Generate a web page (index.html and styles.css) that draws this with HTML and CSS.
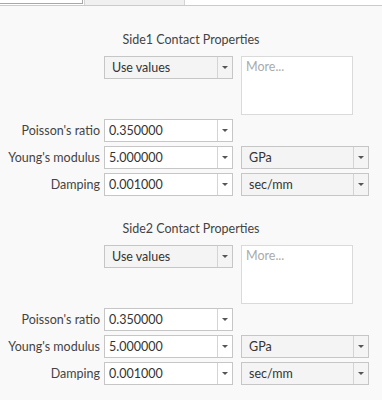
FILE: index.html
```html
<!DOCTYPE html>
<html lang="en">
<head>
  <meta charset="UTF-8" />
  <title>Contact Properties</title>
  <link rel="stylesheet" href="styles.css">
</head>
<body>
  <div class="tabstrip">
    <div class="tab-field"></div>
    <div class="tab"></div>
  </div>

  <section class="props">
    <h2 class="props-title">Side1 Contact Properties</h2>
    <div class="props-grid">
      <span></span>
      <div class="combo combo-select"><span class="combo-text">Use values</span><span class="combo-btn"><i class="arrow"></i></span></div>
      <div class="more">More...</div>

      <label class="prop-label">Poisson's ratio</label>
      <div class="combo"><span class="combo-text">0.350000</span><span class="combo-btn"><i class="arrow"></i></span></div>
      <span></span>

      <label class="prop-label">Young's modulus</label>
      <div class="combo"><span class="combo-text">5.000000</span><span class="combo-btn"><i class="arrow"></i></span></div>
      <div class="combo combo-select combo-unit"><span class="combo-text">GPa</span><span class="combo-btn"><i class="arrow"></i></span></div>

      <label class="prop-label">Damping</label>
      <div class="combo"><span class="combo-text">0.001000</span><span class="combo-btn"><i class="arrow"></i></span></div>
      <div class="combo combo-select combo-unit"><span class="combo-text">sec/mm</span><span class="combo-btn"><i class="arrow"></i></span></div>
    </div>
  </section>

  <section class="props">
    <h2 class="props-title">Side2 Contact Properties</h2>
    <div class="props-grid">
      <span></span>
      <div class="combo combo-select"><span class="combo-text">Use values</span><span class="combo-btn"><i class="arrow"></i></span></div>
      <div class="more">More...</div>

      <label class="prop-label">Poisson's ratio</label>
      <div class="combo"><span class="combo-text">0.350000</span><span class="combo-btn"><i class="arrow"></i></span></div>
      <span></span>

      <label class="prop-label">Young's modulus</label>
      <div class="combo"><span class="combo-text">5.000000</span><span class="combo-btn"><i class="arrow"></i></span></div>
      <div class="combo combo-select combo-unit"><span class="combo-text">GPa</span><span class="combo-btn"><i class="arrow"></i></span></div>

      <label class="prop-label">Damping</label>
      <div class="combo"><span class="combo-text">0.001000</span><span class="combo-btn"><i class="arrow"></i></span></div>
      <div class="combo combo-select combo-unit"><span class="combo-text">sec/mm</span><span class="combo-btn"><i class="arrow"></i></span></div>
    </div>
  </section>
</body>
</html>
```

FILE: styles.css
```css
:root {
  --bg: #f9f9f9;
  --border: #c6c6c6;
  --border-light: #dadada;
  --text: #333;
  --label: #444;
}
*, *::before, *::after {
  box-sizing: border-box;
}
body {
  margin: 0;
  background: var(--bg);
  font-family: Lato, "Open Sans", sans-serif;
  font-size: 12.5px;
  color: var(--text);
}

/* cut-off tab row at the top */
.tabstrip {
  display: flex;
  height: 6px;
  background: #fff;
  border-bottom: 1px solid #cbcbcb;
}
.tab-field {
  width: 83px;
  height: 4px;
  border-right: 1px solid #a8a8a8;
  border-bottom: 1px solid #a8a8a8;
}
.tab {
  margin-left: 1px;
  width: 101px;
  background: #f0f0f0;
  border-left: 1px solid #d4d4d4;
  border-right: 1px solid #d4d4d4;
}

.props {
  padding-top: 26px;
}
.props + .props {
  padding-top: 25px;
}
.props-title {
  margin: 0 0 8px;
  font-size: 12.5px;
  font-weight: normal;
  line-height: 16px;
  text-align: center;
  color: var(--label);
}
.props-grid {
  display: grid;
  grid-template-columns: 104px 129px 136px;
  row-gap: 4px;
  align-items: start;
}
.prop-label {
  text-align: right;
  padding-right: 4px;
  line-height: 23px;
  color: var(--label);
  white-space: nowrap;
}

.combo {
  display: flex;
  height: 23px;
  border: 1px solid var(--border);
  background: #fff;
}
.combo-text {
  flex: 1;
  padding-left: 4px;
  line-height: 21px;
  white-space: nowrap;
}
.combo-btn {
  width: 15px;
  border-left: 1px solid #d4d4d4;
  display: flex;
  align-items: center;
  justify-content: center;
}
.arrow {
  width: 0;
  height: 0;
  border-left: 3px solid transparent;
  border-right: 3px solid transparent;
  border-top: 3px solid #555;
}
.combo-select {
  background: #f4f4f4;
}
.combo-select .combo-text {
  padding-left: 7px;
}
.combo-unit {
  margin-left: 8px;
}

.more {
  margin-left: 8px;
  width: 112px;
  height: 59px;
  background: #fff;
  border: 1px solid var(--border-light);
  padding: 1px 4px;
  line-height: 18px;
  color: #aaa;
}
```
